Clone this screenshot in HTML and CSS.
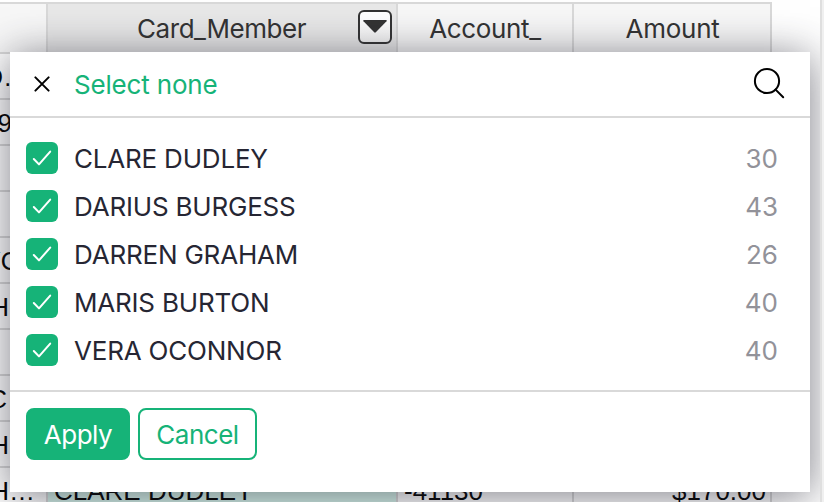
FILE: index.html
```html
<!DOCTYPE html>
<html lang="en">
<head>
<meta charset="utf-8">
<title>Filter</title>
<link rel="stylesheet" href="styles.css">
</head>
<body>
<div class="grid">
  <div class="row head">
    <div class="cell"></div>
    <div class="cell selected"><span class="t-member">Card_Member</span>
      <span class="toggle"><svg width="24" height="13" viewBox="0 0 24 13"><path d="M1 0H23Q24.3 .2 23.5 1.2L12.8 12.3Q12 13 11.2 12.3L.5 1.2Q-.3 .2 1 0Z" fill="#333"/></svg></span>
    </div>
    <div class="cell"><span class="t-account">Account_</span></div>
    <div class="cell"><span class="t-amount">Amount</span></div>
  </div>
  <div class="row"><div class="cell desc d">D…</div><div class="cell"></div><div class="cell"></div><div class="cell"></div></div>
  <div class="row"><div class="cell desc nine">9</div><div class="cell"></div><div class="cell"></div><div class="cell"></div></div>
  <div class="row"><div class="cell"></div><div class="cell"></div><div class="cell"></div><div class="cell"></div></div>
  <div class="row"><div class="cell"></div><div class="cell"></div><div class="cell"></div><div class="cell"></div></div>
  <div class="row"><div class="cell desc yo">YO</div><div class="cell"></div><div class="cell"></div><div class="cell"></div></div>
  <div class="row"><div class="cell desc">H…</div><div class="cell"></div><div class="cell"></div><div class="cell"></div></div>
  <div class="row"><div class="cell"></div><div class="cell"></div><div class="cell"></div><div class="cell"></div></div>
  <div class="row"><div class="cell desc c">C…</div><div class="cell"></div><div class="cell"></div><div class="cell"></div></div>
  <div class="row"><div class="cell desc">H…</div><div class="cell"></div><div class="cell"></div><div class="cell"></div></div>
  <div class="row"><div class="cell desc">H…</div><div class="cell member">CLARE DUDLEY</div><div class="cell account">-41130</div><div class="cell amount">$170.00</div></div>
</div>
<div class="menu">
  <div class="menu-head">
    <svg class="close" width="16" height="16" viewBox="0 0 16 16"><path d="M1.4 1.4L14.6 14.6M14.6 1.4L1.4 14.6" stroke="#000" stroke-width="2" stroke-linecap="round"/></svg>
    <span class="select-none">Select none</span>
    <svg class="search" width="32" height="32" viewBox="0 0 32 32" fill="none" stroke="#000" stroke-width="2"><circle cx="14" cy="14" r="12.1"/><path d="M22.6 22.6L30.2 30.2" stroke-linecap="round"/></svg>
  </div>
  <div class="list">
    <div class="item"><span class="check"><svg width="20" height="18" viewBox="0 0 20 18"><path d="M1.8 10L7 15.4L18.2 2.6" /></svg></span><span class="name">CLARE DUDLEY</span><span class="count">30</span></div>
    <div class="item"><span class="check"><svg width="20" height="18" viewBox="0 0 20 18"><path d="M1.8 10L7 15.4L18.2 2.6" /></svg></span><span class="name">DARIUS BURGESS</span><span class="count">43</span></div>
    <div class="item"><span class="check"><svg width="20" height="18" viewBox="0 0 20 18"><path d="M1.8 10L7 15.4L18.2 2.6" /></svg></span><span class="name">DARREN GRAHAM</span><span class="count">26</span></div>
    <div class="item"><span class="check"><svg width="20" height="18" viewBox="0 0 20 18"><path d="M1.8 10L7 15.4L18.2 2.6" /></svg></span><span class="name">MARIS BURTON</span><span class="count">40</span></div>
    <div class="item"><span class="check"><svg width="20" height="18" viewBox="0 0 20 18"><path d="M1.8 10L7 15.4L18.2 2.6" /></svg></span><span class="name">VERA OCONNOR</span><span class="count">40</span></div>
  </div>
  <div class="foot"><button class="btn apply">Apply</button><button class="btn cancel">Cancel</button></div>
</div>
<div class="edge"></div>
</body>
</html>
```
FILE: styles.css
```css
* { box-sizing: border-box; }
body { margin: 0; width: 824px; height: 502px; overflow: hidden; position: relative; background: #fff; font-family: Inter, sans-serif; font-size: 26px; font-weight: 400; }
svg { display: block; flex: none; }
.grid { width: 772px; padding-top: 2px; }
.row { display: grid; grid-template-columns: 48px 350px 176px 198px; height: 46px; }
.cell { display: flex; align-items: center; padding-top: 2px; border-right: 2px solid #d9d9d9; border-bottom: 2px solid #d9d9d9; white-space: nowrap; font-family: "Liberation Sans", sans-serif; min-width: 0; }
.head { height: 52px; }
.head .cell { padding-top: 1px; border-top: 2px solid #d9d9d9; background: #f7f7f7; color: #333; justify-content: center; font-family: Inter, sans-serif; }
.head .selected { background: #e8e8e8; justify-content: flex-end; padding-right: 4px; }
.t-member { margin-right: 52px; letter-spacing: -.45px; }
.t-account { letter-spacing: -.35px; }
.t-amount { letter-spacing: -.25px; padding-left: 1px; }
.toggle { width: 34px; height: 34px; margin-bottom: 3px; border: 2px solid #333; border-radius: 6px; background: linear-gradient(#fff 20%, #f5f5f5); display: flex; justify-content: center; padding-top: 8px; }
.desc { justify-content: flex-end; padding-right: 11px; }
.d { padding-right: 17px; }
.nine { padding-right: 34px; }
.yo { padding-right: 25px; }
.c { padding-right: 13px; }
.member { background: #d5f3ea; padding-left: 6px; }
.account { padding-left: 6px; }
.amount { justify-content: flex-end; padding-right: 4px; }
.menu { position: absolute; left: 10px; top: 52px; width: 800px; height: 440px; background: #fff; box-shadow: 0 4px 40px rgba(38,38,51,.6); display: flex; flex-direction: column; }
.menu-head { height: 66px; border-bottom: 2px solid #d9d9d9; display: flex; align-items: center; padding: 0 25px 0 24px; }
.select-none { margin-left: 24px; color: #16b378; letter-spacing: -.18px; }
.search { margin-left: auto; position: relative; top: -1px; }
.list { height: 274px; padding: 16px 32px 16px 16px; border-bottom: 2px solid #d9d9d9; }
.item { height: 48px; display: flex; align-items: center; color: #262633; }
.check { width: 32px; height: 32px; border-radius: 6px; background: #16b378; display: flex; align-items: center; justify-content: center; margin-right: 16px; }
.check path { fill: none; stroke: #fff; stroke-width: 2; stroke-linecap: round; stroke-linejoin: round; }
.name { letter-spacing: -.2px; }
.count { margin-left: auto; color: #929299; }
.foot { display: flex; gap: 8px; padding: 16px; }
.btn { height: 52px; padding: 0; border: 2px solid #16b378; border-radius: 8px; font: 400 26px Inter, sans-serif; letter-spacing: -.5px; }
.apply { width: 104px; background: #16b378; color: #fff; }
.cancel { width: 119px; background: #fff; color: #16b378; }
.edge { position: absolute; left: 820px; top: 0; width: 4px; height: 502px; background: #f0f0f0; border-left: 2px solid #dfdfdf; }
```
